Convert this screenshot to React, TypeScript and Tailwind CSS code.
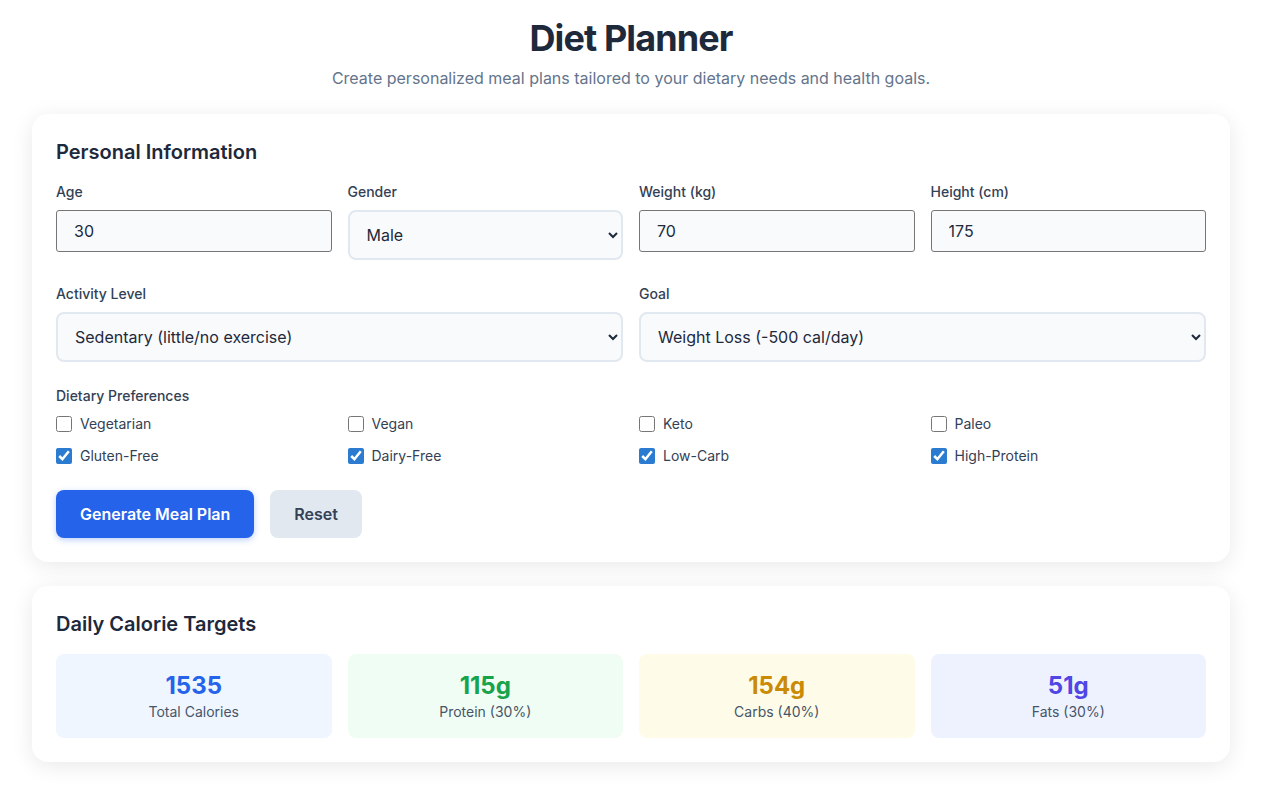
import { useState } from 'react';

const preferences = [
  { id: 'vegetarian', label: 'Vegetarian' },
  { id: 'vegan', label: 'Vegan' },
  { id: 'keto', label: 'Keto' },
  { id: 'paleo', label: 'Paleo' },
  { id: 'gluten-free', label: 'Gluten-Free' },
  { id: 'dairy-free', label: 'Dairy-Free' },
  { id: 'low-carb', label: 'Low-Carb' },
  { id: 'high-protein', label: 'High-Protein' },
];

const targets = [
  { value: '1535', label: 'Total Calories', box: 'bg-[#eff6ff]', text: 'text-[#2563eb]' },
  { value: '115g', label: 'Protein (30%)', box: 'bg-[#f0fdf4]', text: 'text-[#16a34a]' },
  { value: '154g', label: 'Carbs (40%)', box: 'bg-[#fefce8]', text: 'text-[#ca8a04]' },
  { value: '51g', label: 'Fats (30%)', box: 'bg-[#eef2ff]', text: 'text-[#4f46e5]' },
];

const days = ['Monday', 'Tuesday', 'Wednesday', 'Thursday', 'Friday', 'Saturday', 'Sunday'];

const meals = [
  { name: 'Breakfast', dish: 'Greek yogurt with berries and almonds', kcal: 384 },
  { name: 'Lunch', dish: 'Grilled chicken salad with olive oil dressing', kcal: 537 },
  { name: 'Dinner', dish: 'Baked salmon with roasted vegetables', kcal: 460 },
  { name: 'Snack', dish: 'Hard-boiled eggs and cucumber slices', kcal: 154 },
];

const inputClass =
  'w-full h-[42px] px-[17px] text-base text-[#1e293b] bg-[#f8fafc] border border-[#767676] rounded-[3px] outline-none';
const selectClass =
  'w-full h-[50px] pl-[13px] pr-3 text-base text-[#1e293b] bg-[#f8fafc] border-2 border-[#e2e8f0] rounded-lg outline-none';
const labelClass = 'block mb-2 text-sm font-medium text-[#334155]';

function Card({ title, children }: { title: string; children: React.ReactNode }) {
  return (
    <section className="bg-white rounded-2xl p-6 shadow-[0_4px_22px_rgba(0,0,0,0.09)]">
      <h2 className="mb-4 text-xl font-semibold text-[#1e293b]">{title}</h2>
      {children}
    </section>
  );
}

export default function App() {
  const [checked, setChecked] = useState<Record<string, boolean>>({
    'gluten-free': true,
    'dairy-free': true,
    'low-carb': true,
    'high-protein': true,
  });

  return (
    <div className="min-h-screen bg-white pl-8 pr-[47px] pt-[18px] pb-10 font-['Inter',sans-serif]">
      <div className="mx-auto max-w-[1198px]">
        <header className="mb-[24px] text-center">
          <h1 className="mb-2 text-4xl font-bold tracking-tight text-[#1e293b]">Diet Planner</h1>
          <p className="text-base text-[#64748b]">
            Create personalized meal plans tailored to your dietary needs and health goals.
          </p>
        </header>

        <div className="flex flex-col gap-6">
          <Card title="Personal Information">
            <div className="mb-6 grid grid-cols-4 items-start gap-4">
              <div>
                <label className={labelClass}>Age</label>
                <input className={inputClass} type="text" defaultValue="30" />
              </div>
              <div>
                <label className={labelClass}>Gender</label>
                <select className={selectClass} defaultValue="male">
                  <option value="male">Male</option>
                  <option value="female">Female</option>
                </select>
              </div>
              <div>
                <label className={labelClass}>Weight (kg)</label>
                <input className={inputClass} type="text" defaultValue="70" />
              </div>
              <div>
                <label className={labelClass}>Height (cm)</label>
                <input className={inputClass} type="text" defaultValue="175" />
              </div>
            </div>

            <div className="mb-6 grid grid-cols-2 gap-4">
              <div>
                <label className={labelClass}>Activity Level</label>
                <select className={selectClass} defaultValue="sedentary">
                  <option value="sedentary">Sedentary (little/no exercise)</option>
                  <option value="light">Lightly active (1-3 days/week)</option>
                  <option value="moderate">Moderately active (3-5 days/week)</option>
                  <option value="very">Very active (6-7 days/week)</option>
                </select>
              </div>
              <div>
                <label className={labelClass}>Goal</label>
                <select className={selectClass} defaultValue="loss">
                  <option value="loss">Weight Loss (-500 cal/day)</option>
                  <option value="maintain">Maintain Weight</option>
                  <option value="gain">Weight Gain (+500 cal/day)</option>
                </select>
              </div>
            </div>

            <div className="mb-6">
              <label className={labelClass}>Dietary Preferences</label>
              <div className="grid grid-cols-4 gap-x-4 gap-y-3">
                {preferences.map((p) => (
                  <label key={p.id} className="flex h-5 items-center gap-2 text-sm text-[#334155]">
                    <input
                      type="checkbox"
                      className="m-0 h-4 w-4 accent-[#2b7bd0]"
                      checked={!!checked[p.id]}
                      onChange={(e) => setChecked({ ...checked, [p.id]: e.target.checked })}
                    />
                    {p.label}
                  </label>
                ))}
              </div>
            </div>

            <div className="flex gap-4">
              <button className="rounded-lg bg-[#2563eb] px-6 py-3 text-base font-semibold text-white shadow-[0_2px_6px_rgba(37,99,235,0.3)]">
                Generate Meal Plan
              </button>
              <button className="rounded-lg bg-[#e2e8f0] px-6 py-3 text-base font-semibold text-[#334155]">
                Reset
              </button>
            </div>
          </Card>

          <Card title="Daily Calorie Targets">
            <div className="grid grid-cols-4 gap-4">
              {targets.map((t) => (
                <div key={t.label} className={`rounded-lg p-4 text-center ${t.box}`}>
                  <div className={`text-2xl font-bold ${t.text}`}>{t.value}</div>
                  <div className="text-sm text-[#475569]">{t.label}</div>
                </div>
              ))}
            </div>
          </Card>
        </div>

        {/* meal plan below the fold */}
        <div className="mt-[72px]">
          <Card title="Weekly Meal Plan">
            <div className="flex flex-col gap-6">
              {days.map((day) => (
                <div key={day} className="rounded-lg border border-[#e2e8f0] p-4">
                  <h3 className="mb-3 text-lg font-semibold text-[#1e293b]">{day}</h3>
                  <div className="grid grid-cols-2 gap-4">
                    {meals.map((m) => (
                      <div key={m.name} className="rounded-lg bg-[#f8fafc] p-4">
                        <div className="text-sm font-semibold text-[#2563eb]">{m.name}</div>
                        <div className="mt-1 text-base text-[#334155]">{m.dish}</div>
                        <div className="mt-1 text-sm text-[#64748b]">{m.kcal} kcal</div>
                      </div>
                    ))}
                  </div>
                </div>
              ))}
            </div>
          </Card>
        </div>
      </div>
    </div>
  );
}
